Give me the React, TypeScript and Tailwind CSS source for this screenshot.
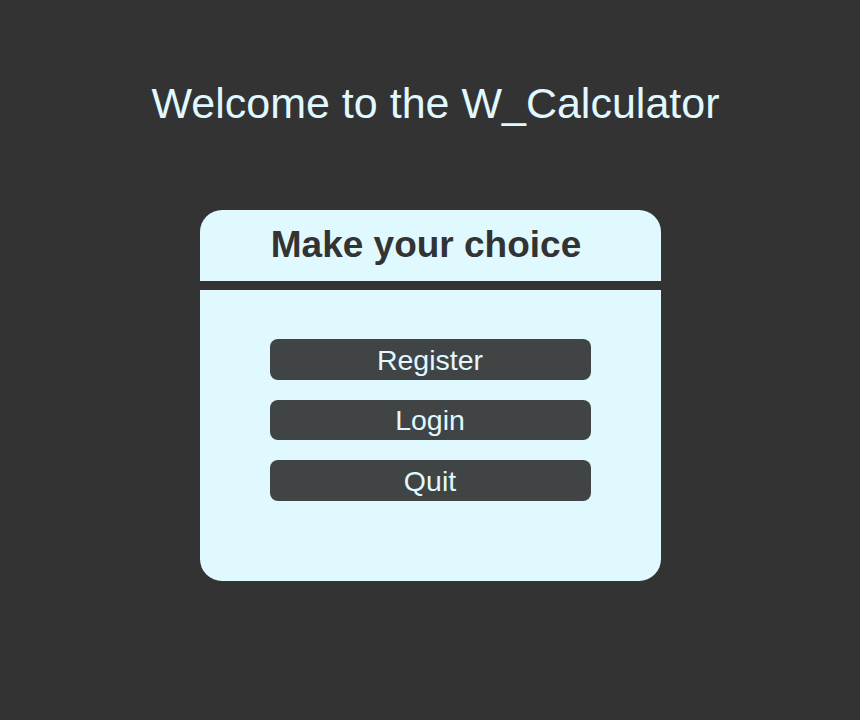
export default function App() {
  return (
    <div
      className="min-h-[720px] w-full bg-[#333333] flex flex-col items-center"
      style={{ fontFamily: '"Liberation Sans", Arial, sans-serif' }}
    >
      <h1 className="pt-[82px] pl-[11px] text-[43px] leading-[43px] text-[#e0f8ff] font-normal whitespace-nowrap">
        Welcome to the W_Calculator
      </h1>
      <div className="mt-[85px] w-[461px] flex flex-col gap-[9px]">
        <div className="h-[71px] rounded-t-[22px] bg-[#e0f9ff] flex justify-center pr-[8px] pt-[16px]">
          <h2 className="text-[37px] leading-[37px] font-bold text-[#333333] whitespace-nowrap">
            Make your choice
          </h2>
        </div>
        <div className="h-[291px] rounded-b-[22px] bg-[#e0f9ff] flex flex-col items-center pt-[49px] gap-[20px]">
          {["Register", "Login", "Quit"].map((t) => (
            <button
              key={t}
              className="w-[321px] h-[40.5px] rounded-[8px] bg-[#414444] text-[#e0f8ff] text-[28.5px] leading-[28.5px] pt-[1px] flex items-center justify-center"
            >
              {t}
            </button>
          ))}
        </div>
      </div>
    </div>
  );
}
